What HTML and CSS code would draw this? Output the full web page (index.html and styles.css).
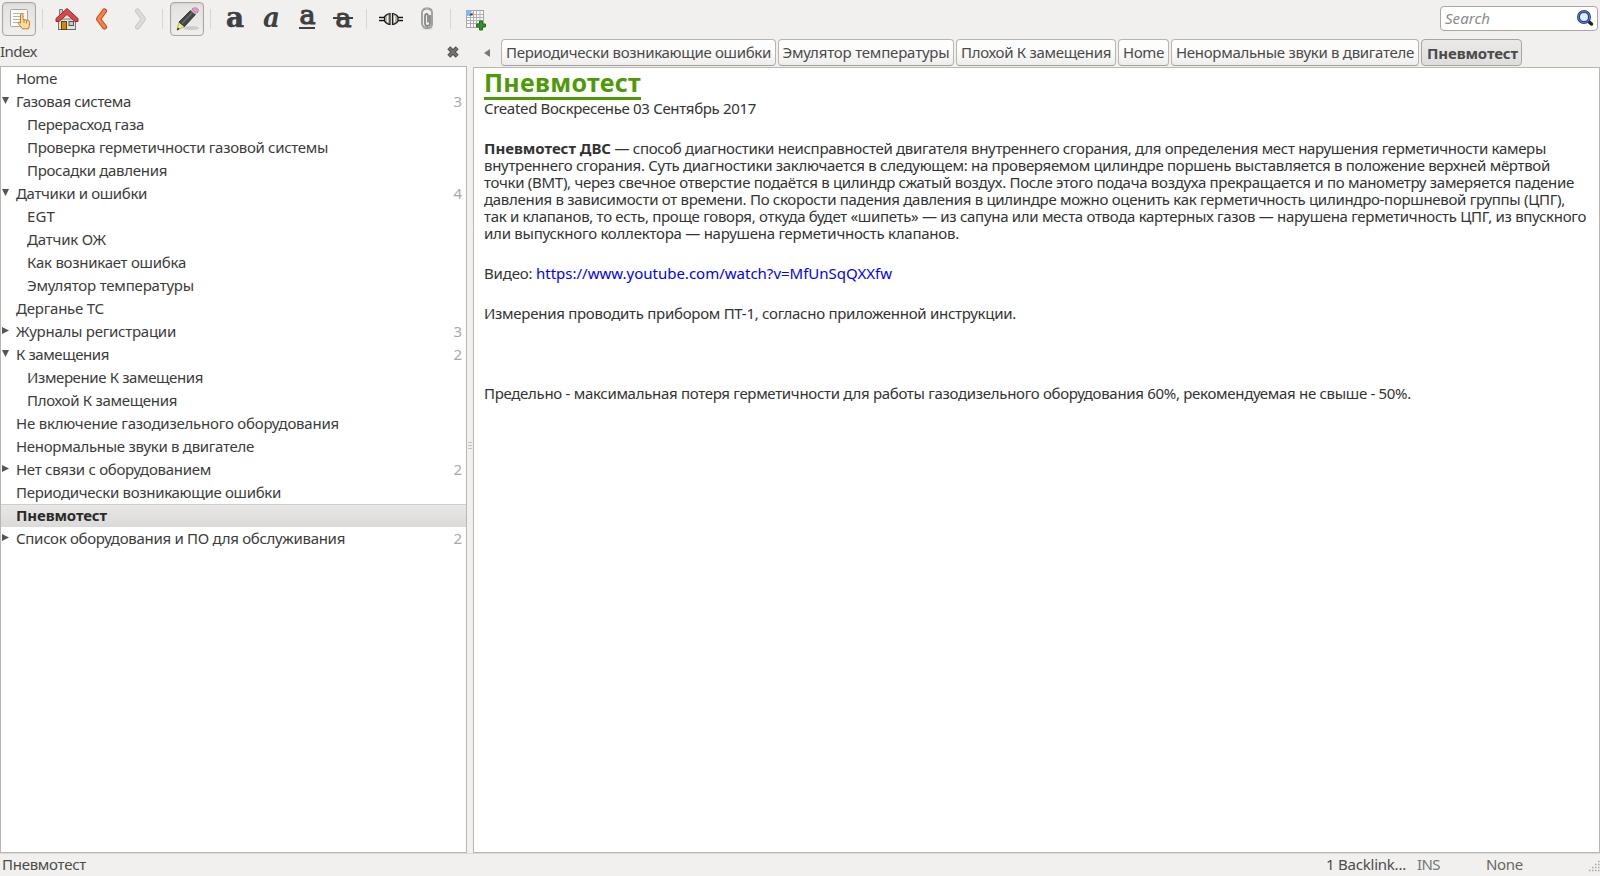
FILE: index.html
```html
<!DOCTYPE html>
<html lang="ru">
<head>
<meta charset="utf-8">
<title>Пневмотест</title>
<link rel="stylesheet" href="styles.css">
</head>
<body>
<header class="toolbar">
  <button class="tool pressed"><svg width="24" height="24" viewBox="0 0 24 24"><rect x="3.500" y="2.500" width="17" height="17" rx="1" fill="#fafaf8" stroke="#a9a99f"/><path d="M6 6.500h11M6 9.500h11M6 12.500h11M6 15.500h7" stroke="#b4b4ac"/><path d="M13.500 7.500q1.500-1.500 2.500 0v5l5 .8q1.500.5 1.500 2v3l-1 3.500h-6l-4-5q-.5-2 1.500-1.800l.5 1.200z" fill="#fbdca4" stroke="#c47f20"/><path d="M17 13v3M19.500 13.500v3" stroke="#c47f20"/></svg></button>
  <i class="sep"></i>
  <button class="tool"><svg width="24" height="24" viewBox="0 0 24 24"><path d="M3.500 12h17v10.500h-17z" fill="#e6e2d8" stroke="#77776f"/><path d="M3 22.500h18" stroke="#666"/><rect x="6.500" y="14.500" width="5" height="8" fill="#c98a1a" stroke="#704400"/><rect x="14" y="14.500" width="4.500" height="4" fill="#b9cddd" stroke="#555"/><path d="M4.500 2.500h3v5h-3z" fill="#ccc" stroke="#777"/><path d="M12 1.500L23 11.500v3h-3L12 7.500l-8 7H1v-3z" fill="#d2494e" stroke="#a3262d"/></svg></button>
  <button class="tool"><svg width="24" height="24" viewBox="0 0 24 24"><path d="M13.500 4L7.500 12l6 8" fill="none" stroke="#c04512" stroke-width="5" stroke-linecap="round" stroke-linejoin="round"/><path d="M13.500 4L7.500 12l6 8" fill="none" stroke="#f2844a" stroke-width="3.200" stroke-linecap="round" stroke-linejoin="round"/></svg></button>
  <button class="tool"><svg width="24" height="24" viewBox="0 0 24 24"><path d="M10.500 4L16.500 12l-6 8" fill="none" stroke="#c9c7c4" stroke-width="5" stroke-linecap="round" stroke-linejoin="round"/><path d="M10.500 4L16.500 12l-6 8" fill="none" stroke="#dcdbd8" stroke-width="3.200" stroke-linecap="round" stroke-linejoin="round"/></svg></button>
  <i class="sep"></i>
  <button class="tool pressed"><svg width="26" height="26" viewBox="0 0 26 26"><ellipse cx="17" cy="22" rx="8" ry="2" fill="#cfcdca"/><path d="M3 24l2-8 5.500 4.500z" fill="#f3e886" stroke="#a6a04b" stroke-width=".8"/><path d="M3 24.500l.8-3 1.800 1.500z" fill="#222"/><path d="M5 16L16.500 4.500l5 4L10.500 20.500z" fill="#444745" stroke="#222" stroke-width=".8"/><path d="M8 17.500L18.500 6.500" stroke="#6e706e" stroke-width="1.300"/><path d="M16.500 4.500l1.500-1.500 5 4-1.500 1.500z" fill="#bbb"/><path d="M18 3q1.500-2 4.500-1t1.500 4l-1 1z" fill="#e99ac9" stroke="#b878a0" stroke-width=".8"/></svg></button>
  <i class="sep"></i>
  <button class="tool"><svg class="glyph" width="24" height="24" viewBox="0 0 24 24"><text class="outlined" x="3" y="20" font-size="27" font-weight="700" textLength="18" lengthAdjust="spacingAndGlyphs">a</text></svg></button>
  <button class="tool"><svg class="glyph" width="24" height="24" viewBox="0 0 24 24"><text x="4" y="20" font-size="28" font-style="italic" font-weight="700" textLength="17" lengthAdjust="spacingAndGlyphs">a</text></svg></button>
  <button class="tool"><svg class="glyph" width="24" height="24" viewBox="0 0 24 24"><text class="heavy" x="4.500" y="17" font-size="26" textLength="16" lengthAdjust="spacingAndGlyphs">a</text><path d="M4 21h16" stroke="#3d4141" stroke-width="2"/></svg></button>
  <button class="tool"><svg class="glyph" width="24" height="24" viewBox="0 0 24 24"><text class="heavy" x="4.500" y="19.500" font-size="26" textLength="16" lengthAdjust="spacingAndGlyphs">a</text><path d="M2 11h20" stroke="#3d4141" stroke-width="2"/></svg></button>
  <i class="sep"></i>
  <button class="tool"><svg width="24" height="24" viewBox="0 0 24 24"><path d="M0 10.500h7M0 13.500h7M17 10.500h7M17 13.500h7" stroke="#111" stroke-width="1.300"/><path d="M0 12h7M17 12h7" stroke="#ddd"/><path d="M11 6.500Q7 7 5.500 10v4Q7 17 11 17.500z" fill="#b4b2a5" stroke="#1a1a1a" stroke-width="1.200"/><path d="M13.500 6.500q4 .5 5.500 3.500v4q-1.500 3-5.500 3.500z" fill="#b4b2a5" stroke="#1a1a1a" stroke-width="1.200"/><path d="M8.500 9v6M15.500 9v6" stroke="#f4f4ee" stroke-width="1.200"/></svg></button>
  <button class="tool"><svg width="24" height="24" viewBox="0 0 24 24"><ellipse cx="12" cy="21.500" rx="6" ry="1.500" fill="#ddd"/><path d="M15 8v8.500q-.3 2.500-2.500 2.500T10 16.500V9q0-2 1.500-2T13 9v6.500M7 17V6q0-4.500 5-4.500t5 4.500v11q0 4-4.500 4T7 17" fill="none" stroke="#858782" stroke-width="1.800"/><path d="M7 17V6q0-4.500 5-4.500t5 4.500v11q0 4-4.500 4T7 17" fill="none" stroke="#c5c6c2" stroke-width=".7"/></svg></button>
  <i class="sep"></i>
  <button class="tool"><svg width="24" height="24" viewBox="0 0 24 24"><rect x="3.500" y="3.500" width="17" height="17" fill="#fafafa" stroke="#a4a4a4"/><path d="M3.500 7.500h17M3.500 10.500h17M3.500 13.500h17M3.500 16.500h17M7.500 3.500v17M10.500 3.500v17M13.500 3.500v17M17 3.500v17" stroke="#b0b0b0"/><path d="M3 3h7l-5 6H3z" fill="#82b5f4"/><path d="M9.500 5.500v3h-4z" fill="#444"/><path d="M16.500 14h3v3h3v3h-3v3h-3v-3h-3v-3h3z" fill="#3b8c32" stroke="#246b1e"/></svg></button>
  <label class="search"><em data-w="45">Search</em><svg width="18" height="18" viewBox="0 0 18 18"><path d="M12 12l3.500 3" stroke="#222" stroke-width="3.500" stroke-linecap="round"/><circle cx="8" cy="8" r="5.500" fill="#e4edf7" stroke="#24408c" stroke-width="3"/><circle cx="8" cy="8" r="5.700" fill="none" stroke="#5b7fd0"/></svg></label>
</header>

<main class="panes">
  <section class="index">
    <div class="index-head"><span data-w="37">Index</span><svg width="12" height="12" viewBox="0 0 12 12"><path d="M1.800 1.800l8.400 8.400M10.200 1.800l-8.400 8.400" stroke="#4d4d4d" stroke-width="4.200"/><path d="M2 2l8 8M10 2l-8 8" stroke="#737373" stroke-width="2.200"/></svg></div>
    <ul class="tree">
      <li><span data-w="41">Home</span></li>
      <li class="open"><span data-w="115">Газовая система</span><b>3</b></li>
      <li class="child"><span data-w="117">Перерасход газа</span></li>
      <li class="child"><span data-w="301">Проверка герметичности газовой системы</span></li>
      <li class="child"><span data-w="140">Просадки давления</span></li>
      <li class="open"><span data-w="131">Датчики и ошибки</span><b>4</b></li>
      <li class="child"><span data-w="28">EGT</span></li>
      <li class="child"><span data-w="79">Датчик ОЖ</span></li>
      <li class="child"><span data-w="159">Как возникает ошибка</span></li>
      <li class="child"><span data-w="167">Эмулятор температуры</span></li>
      <li><span data-w="88">Дерганье ТС</span></li>
      <li class="closed"><span data-w="160">Журналы регистрации</span><b>3</b></li>
      <li class="open"><span data-w="93">К замещения</span><b>2</b></li>
      <li class="child"><span data-w="176">Измерение К замещения</span></li>
      <li class="child"><span data-w="150">Плохой К замещения</span></li>
      <li><span data-w="323">Не включение газодизельного оборудования</span></li>
      <li><span data-w="238">Ненормальные звуки в двигателе</span></li>
      <li class="closed"><span data-w="195">Нет связи с оборудованием</span><b>2</b></li>
      <li><span data-w="265">Периодически возникающие ошибки</span></li>
      <li class="selected"><span data-w="91">Пневмотест</span></li>
      <li class="closed"><span data-w="329">Список оборудования и ПО для обслуживания</span><b>2</b></li>
    </ul>
  </section>
  <div class="grip"><i></i><i></i><i></i></div>
  <section class="page">
    <nav class="tabs">
      <i class="back"></i>
      <button class="tab t1"><span data-w="265">Периодически возникающие ошибки</span></button>
      <button class="tab t2"><span data-w="167">Эмулятор температуры</span></button>
      <button class="tab t3"><span data-w="150">Плохой К замещения</span></button>
      <button class="tab t4"><span data-w="41">Home</span></button>
      <button class="tab t5"><span data-w="238">Ненормальные звуки в двигателе</span></button>
      <button class="tab t6 current"><span data-w="91">Пневмотест</span></button>
    </nav>
    <article class="note">
      <h1><span data-w="157">Пневмотест</span></h1>
      <p class="created"><span data-w="272">Created Воскресенье 03 Сентябрь 2017</span></p>
      <p>
        <strong data-w="127">Пневмотест ДВС</strong><span data-w="935"> — способ диагностики неисправностей двигателя внутреннего сгорания, для определения мест нарушения герметичности камеры</span><br>
        <span data-w="1066">внутреннего сгорания. Суть диагностики заключается в следующем: на проверяемом цилиндре поршень выставляется в положение верхней мёртвой</span><br>
        <span data-w="1090">точки (ВМТ), через свечное отверстие подаётся в цилиндр сжатый воздух. После этого подача воздуха прекращается и по манометру замеряется падение</span><br>
        <span data-w="1081">давления в зависимости от времени. По скорости падения давления в цилиндре можно оценить как герметичность цилиндро-поршневой группы (ЦПГ),</span><br>
        <span data-w="1102">так и клапанов, то есть, проще говоря, откуда будет «шипеть» — из сапуна или места отвода картерных газов — нарушена герметичность ЦПГ, из впускного</span><br>
        <span data-w="475">или выпускного коллектора — нарушена герметичность клапанов.</span>
      </p>
      <p><span data-w="52">Видео: </span><a data-w="356">https://www.youtube.com/watch?v=MfUnSqQXXfw</a></p>
      <p><span data-w="532">Измерения проводить прибором ПТ-1, согласно приложенной инструкции.</span></p>
      <p class="limit"><span data-w="927">Предельно - максимальная потеря герметичности для работы газодизельного оборудования 60%, рекомендуемая не свыше - 50%.</span></p>
    </article>
  </section>
</main>

<footer class="status">
  <span class="name"><span data-w="84">Пневмотест</span></span>
  <span class="links"><span data-w="80">1 Backlink...</span></span>
  <span class="mode"><span data-w="23">INS</span></span>
  <span class="style"><span data-w="37">None</span></span>
  <svg class="corner" width="12" height="14" viewBox="0 0 12 14"><path d="M1 12.500h11M4 9.500h8M7 6.500h5M10 3.500h2" stroke="#aaa8a4" stroke-width="1.500" stroke-dasharray="1.500 1.500"/></svg>
</footer>
<script src="fit.js"></script>
</body>
</html>
```
FILE: styles.css
```css
* { box-sizing: border-box; }
body {
  margin: 0; width: 1600px; height: 876px; overflow: hidden;
  display: flex; flex-direction: column;
  background: #f1f0ee; color: #4a4a4a;
  font: 15px/17px "Noto Sans", "Open Sans", sans-serif;
}
button { font: inherit; color: inherit; padding: 0; margin: 0; border: 0; background: none; }
[data-w] { white-space: pre; }

.toolbar { height: 38px; flex: none; display: flex; align-items: center; padding-left: 2px; }
.tool { width: 34px; height: 34px; margin-right: 2px; display: flex; align-items: center; justify-content: center; flex: none; }
.tool svg { display: block; }
.pressed { border: 1px solid #aaa7a1; border-radius: 4px; background: linear-gradient(#e2e1df, #efeeec); box-shadow: inset 0 1px 2px #d2d0cd; }
.sep { width: 1px; height: 20px; background: #d9d7d3; margin: 0 7px 0 4px; flex: none; }
.glyph { overflow: visible; font-family: "DejaVu Serif", serif; fill: #3d4141; }
.glyph .outlined { stroke: #3d4141; stroke-width: .6; }
.glyph .heavy { stroke: #3d4141; stroke-width: 1.2; }

.search {
  margin: 0 2px 1px auto; width: 158px; height: 25px; padding: 0 3px 1px 4px;
  display: flex; align-items: center; justify-content: space-between;
  background: #fff; border: 1px solid #aaa59d; border-radius: 4px; color: #8a8a8a;
}

.panes { flex: 1; display: flex; min-height: 0; }
.index { width: 467px; flex: none; display: flex; flex-direction: column; }
.index-head { height: 28px; display: flex; align-items: center; justify-content: space-between; padding: 0 8px 1px 0; }
.tree { flex: 1; margin: 0; padding: 0; list-style: none; background: #fff; border: 1px solid #bab7b0; color: #3c3c3c; }
.tree li { height: 23px; padding: 0 4px 0 15px; display: flex; align-items: center; justify-content: space-between; position: relative; }
.tree .child { padding-left: 26px; }
.tree b { font-weight: 400; color: #aaa; }
.open::before, .closed::before { content: ""; position: absolute; left: 1px; background: #555; width: 7px; height: 7px; top: 7px; }
.open::before { clip-path: polygon(0 0, 100% 0, 50% 100%); }
.closed::before { clip-path: polygon(0 0, 100% 50%, 0 100%); }
.tree .selected { background: linear-gradient(#e9e8e6, #dbdad8); box-shadow: inset 0 1px #d0cecb; font-weight: 700; color: #2b2b2b; }

.grip { width: 6px; flex: none; display: flex; flex-direction: column; gap: 2px; padding: 404px 1px 0; }
.grip i { height: 1px; background: #c5c2bd; }

.page { flex: 1; min-width: 0; display: flex; flex-direction: column; }
.tabs { height: 29px; flex: none; display: flex; align-items: flex-start; padding-top: 1px; }
.back { width: 6px; height: 8px; margin: 10px 11px 0 11px; background: #777; clip-path: polygon(100% 0, 100% 100%, 0 50%); }
.tab { height: 27px; margin-right: 2px; border: 1px solid #b8b5ae; border-bottom-color: #a29f99; border-radius: 4px; background: linear-gradient(#fdfdfd 40%, #eeedeb); flex: none; text-align: center; }
.t1 { width: 275px; }
.t2 { width: 176px; }
.t3 { width: 160px; }
.t4 { width: 51px; }
.t5 { width: 248px; }
.t6 { width: 101px; }
.tab.current { font-weight: 700; padding: 2px 0 0 2px; background: linear-gradient(#ebeae8, #dfdddb); border-color: #a8a5a0; }

.note { flex: 1; background: #fff; border: 1px solid #bab7b0; padding: 0 0 0 10px; color: #333; }
.note h1 { margin: 0; height: 32px; font-size: 25px; line-height: 28px; color: #4e9a06; }
.note h1 span { display: inline-block; height: 32px; border-bottom: 3px solid #4e9a06; }
.note p { margin: 0 0 23px; line-height: 17px; }
.note a { color: #00f; }
.note .limit { padding-top: 40px; }

.status { height: 23px; flex: none; display: flex; align-items: center; padding-bottom: 1px; color: #4c4c4c; border-top: 1px solid #dcdad7; }
.name { width: 1326px; padding-left: 2px; }
.links { width: 91px; }
.mode { width: 69px; color: #777; }
.style { width: 102px; color: #666; }
```
FILE: fit.js
```js
document.querySelectorAll('[data-w]').forEach(function (el) {
  var width = el.getBoundingClientRect().width;
  var count = el.textContent.length;
  el.style.letterSpacing = ((el.dataset.w - width) / count) + 'px';
});
```
